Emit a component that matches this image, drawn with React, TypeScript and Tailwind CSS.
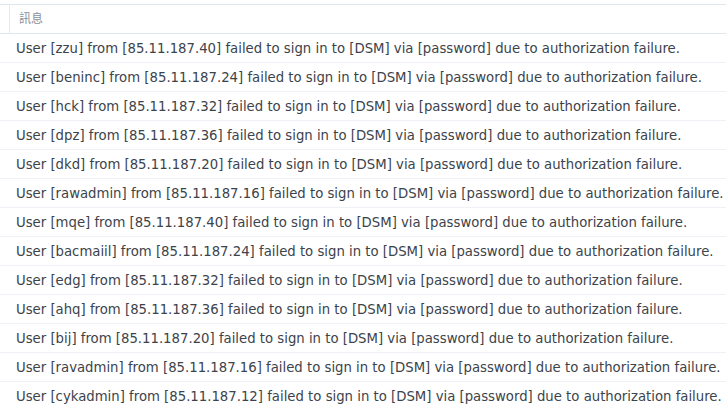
const users: [string, string][] = [
  ["zzu", "40"],
  ["beninc", "24"],
  ["hck", "32"],
  ["dpz", "36"],
  ["dkd", "20"],
  ["rawadmin", "16"],
  ["mqe", "40"],
  ["bacmaiil", "24"],
  ["edg", "32"],
  ["ahq", "36"],
  ["bij", "20"],
  ["ravadmin", "16"],
  ["cykadmin", "12"],
];

export default function App() {
  return (
    <div
      className="w-[726px] h-[408px] overflow-hidden bg-white pt-[4px]"
      style={{ fontFamily: '"DejaVu Sans", "Noto Sans CJK TC", sans-serif' }}
    >
      <div className="flex h-[30px] border-t border-b border-[#dfe6ee]">
        <div className="w-[10px] border-r border-[#e6ecf2]" />
        <div className="flex items-center pl-[9px] text-[12px] text-[#8a9099]">訊息</div>
      </div>
      {users.map(([u, ip], i) => (
        <div
          key={i}
          className="flex h-[29px] items-center pt-[2px] border-b border-[#eef1f5] pl-[16px] text-[13.25px] text-[#3c434b] whitespace-nowrap"
        >
          User [{u}] from [85.11.187.{ip}] failed to sign in to [DSM] via [password] due to authorization failure.
        </div>
      ))}
    </div>
  );
}
